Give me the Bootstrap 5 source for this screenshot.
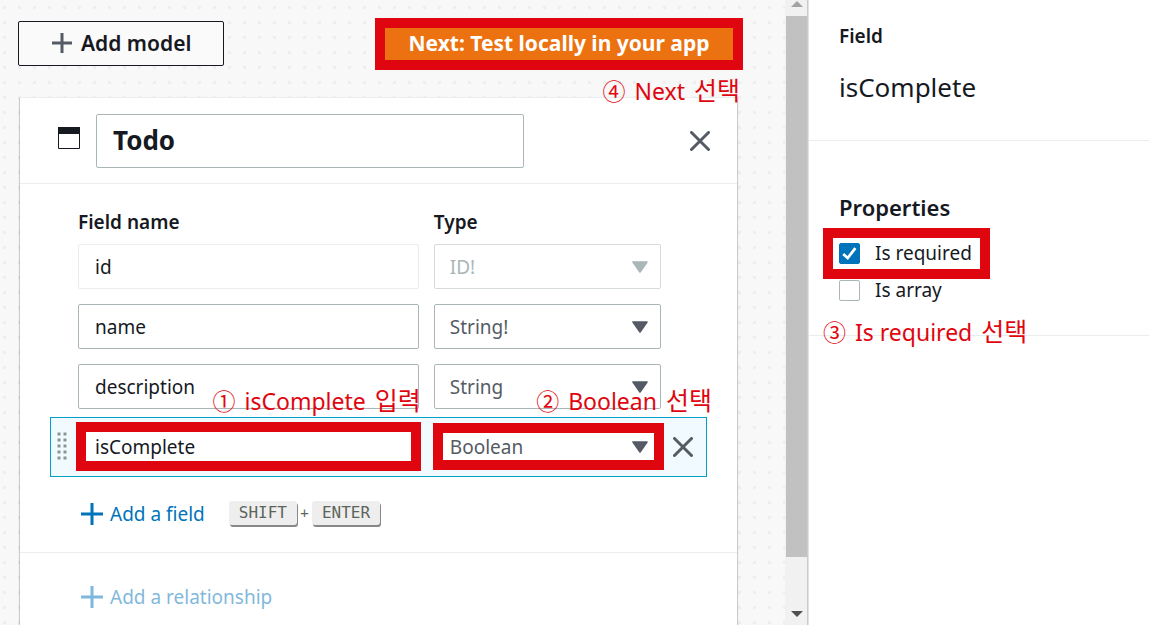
<!DOCTYPE html>
<html lang="ko">
<head>
<meta charset="utf-8">
<meta name="viewport" content="width=device-width, initial-scale=1">
<title>Data modeling</title>
<link href="https://cdn.jsdelivr.net/npm/bootstrap@5.3.0/dist/css/bootstrap.min.css" rel="stylesheet">
<style>
:root { --ink:#16191f; --slate:#545b64; --line:#eaeded; --edge:#aab7b8; --link:#0073bb; --mark-red:#df0610; }
body { font-family:"Noto Sans","Noto Sans CJK KR",sans-serif; font-size:19px; line-height:28px; color:var(--ink); background:#fff; }
.canvas { background:#f8f8f8 conic-gradient(from 90deg at 12px 12px, #eee 90deg, transparent 0) 6px 9px / 15px 15px; padding:21px 47px 0 18px; min-width:0; }
.tool-btn { height:45px; border-radius:2px; font-size:21px; font-weight:600; padding:0 32px 2px; line-height:28px; }
.add-model { background:#fafafa; border:1px solid var(--ink); color:var(--ink); }
.go-next { background:#ec7211; color:#fff; font-weight:700; width:358px; padding:0 0 2px; }
.frame { position:absolute; border:10px solid var(--mark-red); pointer-events:none; z-index:2; }
.frame-next { inset:-3px -5px -4px; }
.frame-name { inset:-2px; }
.frame-type { inset:-1px -3px -1px -1px; }
.frame-check { inset:0; }
.note { position:absolute; z-index:3; display:flex; align-items:baseline; gap:9px; color:var(--mark-red); font-size:23px; line-height:32px; white-space:nowrap; }
.note span { font-family:"Noto Sans CJK KR",sans-serif; font-size:25px; }
.note-next { top:52px; right:-2px; }
.note-name { bottom:52px; right:-2px; }
.note-type { bottom:52px; right:-51px; }
.note-check { left:0; top:86px; }
.model-card { background:#fff; margin:31px 1px 0 2px; border-top:1px solid var(--line); box-shadow:0 1px 1px rgba(0,28,36,.3), 1px 1px 1px rgba(0,28,36,.15), -1px 1px 1px rgba(0,28,36,.15); }
.model-head { padding:16px 27px 15px 38px; border-bottom:1px solid var(--line); }
.model-head .form-control { width:428px; height:54px; font-size:26px; font-weight:700; padding-bottom:2px; }
.model-icon { margin-bottom:6px; }
.form-control, .form-select { border:1px solid var(--edge); border-radius:2px; color:var(--ink); background-color:#fff; font-size:19px; height:45px; padding:0 16px; }
.form-select { color:var(--slate); padding:2px 40px 0 15px; background-image:url("data:image/svg+xml,%3Csvg xmlns='http://www.w3.org/2000/svg' viewBox='0 0 16 12'%3E%3Cpath d='M1 1h14L8 11z' fill='%23545b64' stroke='%23545b64' stroke-width='1.6' stroke-linejoin='round'/%3E%3C/svg%3E"); background-size:16px 12px; background-position:right 12px center; }
.form-select:disabled { color:var(--edge); border-color:#d5dbdb; background-color:#fff; background-image:url("data:image/svg+xml,%3Csvg xmlns='http://www.w3.org/2000/svg' viewBox='0 0 16 12'%3E%3Cpath d='M1 1h14L8 11z' fill='%23aab7b8' stroke='%23aab7b8' stroke-width='1.6' stroke-linejoin='round'/%3E%3C/svg%3E"); }
.form-control[readonly] { border-color:var(--line); }
.fields { padding:24px 30px; }
.field-row { display:grid; grid-template-columns:27px 3fr 2fr 45px; align-items:start; border:1px solid transparent; height:60px; padding-top:6px; }
.field-row.heads { height:29px; border-width:0 1px; padding:0; font-weight:600; line-height:28px; }
.field-row .name-cell { margin-right:9px; }
.field-row .type-cell { margin-left:6px; }
.field-row.active { background:#f1faff; border-color:#00a1c9; }
.field-row .icon-btn { height:45px; }
.grip { margin:8px 0 0 6px; }
.icon-btn { background:none; border:0; padding:0; line-height:0; color:var(--slate); }
.text-btn { background:none; border:0; padding:0; color:var(--link); display:flex; align-items:center; gap:7px; }
.text-btn:disabled { opacity:.5; }
.add-row { padding:23px 0 0 31px; }
.key-combo { font-family:"DejaVu Sans Mono","Liberation Mono",monospace; font-size:16px; line-height:24px; color:#5c645c; padding-bottom:2px; }
.key { background:#eee; border-radius:3px; padding:0 10px; box-shadow:1px 2px 0 #888; }
.key-plus { width:15px; text-align:center; font-size:14px; }
.relations { border-top:1px solid var(--line); padding:30px 61px; }
.scroll-track { width:23px; background:#f1f1f1; border-right:1px solid #c8cccc; padding-left:1px; }
.scroll-track svg { display:block; }
.thumb { background:#c1c1c1; flex-grow:541; }
.thumb-rest { flex-grow:52; }
.inspector { width:341px; border-left:1px solid #dfe3e3; }
.panel { padding:22px 30px 34px; border-bottom:1px solid var(--line); }
.panel-props { padding:50px 30px 31px; }
.panel-title { font-size:22px; font-weight:600; line-height:32px; margin:0 0 5px; }
.panel-label { font-size:19px; font-weight:600; line-height:28px; margin:0 0 19px; }
.panel-value { font-size:26px; line-height:36px; padding-bottom:1px; }
.check-wrap { position:relative; width:167px; height:51px; margin:0 0 -3px -16px; padding:0 0 1px 16px; }
.check-line { display:flex; align-items:center; gap:15px; }
.form-check-input { width:21px; height:21px; margin:0; border:1px solid var(--edge); flex-shrink:0; }
.form-check-input[type=checkbox] { border-radius:2px; }
.form-check-input:checked { background-color:var(--link); border-color:var(--link); }
.form-check-input:checked[type=checkbox] { background-image:url("data:image/svg+xml,%3Csvg xmlns='http://www.w3.org/2000/svg' viewBox='0 0 21 21'%3E%3Cpath d='M3.5 11l5 4.5L17 4.5' fill='none' stroke='%23fff' stroke-width='3'/%3E%3C/svg%3E"); }
</style>
</head>
<body>
<div class="d-flex vh-100 overflow-hidden">
  <main class="canvas flex-grow-1 d-flex flex-column">
    <div class="d-flex justify-content-between">
      <button type="button" class="btn tool-btn add-model d-flex align-items-center gap-2">
        <svg width="22" height="22" viewBox="0 0 22 22" stroke="#545b64" stroke-width="3" aria-hidden="true"><path d="M11 1v20M1 11h20"/></svg>Add model
      </button>
      <div class="position-relative">
        <button type="button" class="btn tool-btn go-next">Next: Test locally in your app</button>
        <span class="frame frame-next"></span>
        <div class="note note-next">④ <b class="fw-normal">Next</b> <span>선택</span></div>
      </div>
    </div>
    <section class="model-card flex-grow-1">
      <div class="model-head d-flex align-items-center">
        <svg class="model-icon me-3" width="22" height="22" viewBox="0 0 22 22" aria-hidden="true"><path d="M.5.5h21v21H.5z" fill="#fff" stroke="#16191f"/><path d="M0 0h22v7H0z" fill="#16191f"/></svg>
        <input class="form-control" aria-label="Model name" value="Todo">
        <button type="button" class="icon-btn ms-auto" aria-label="Remove model"><svg width="20" height="20" viewBox="0 0 20 20" stroke="currentColor" stroke-width="3" stroke-linecap="round"><path d="M1.5 1.5l17 17M18.5 1.5l-17 17"/></svg></button>
      </div>
      <div class="fields">
        <div class="field-row heads"><span></span><span class="name-cell">Field name</span><span class="type-cell">Type</span></div>
        <div class="field-row"><span></span>
          <div class="name-cell"><input class="form-control" aria-label="Field name" value="id" readonly></div>
          <div class="type-cell"><select class="form-select" aria-label="Type" disabled><option>ID!</option></select></div></div>
        <div class="field-row"><span></span>
          <div class="name-cell"><input class="form-control" aria-label="Field name" value="name"></div>
          <div class="type-cell"><select class="form-select" aria-label="Type"><option>String!</option></select></div></div>
        <div class="field-row"><span></span>
          <div class="name-cell"><input class="form-control" aria-label="Field name" value="description"></div>
          <div class="type-cell"><select class="form-select" aria-label="Type"><option>String</option></select></div></div>
        <div class="field-row active">
          <svg class="grip" width="11" height="28" viewBox="0 0 11 28" stroke="#879596" stroke-width="3" stroke-dasharray="3 3" aria-hidden="true"><path d="M2 .5v27M8 .5v27"/></svg>
          <div class="name-cell position-relative"><input class="form-control" aria-label="Field name" value="isComplete"><span class="frame frame-name"></span><div class="note note-name">① <b class="fw-normal">isComplete</b> <span>입력</span></div></div>
          <div class="type-cell position-relative"><select class="form-select" aria-label="Type"><option>Boolean</option></select><span class="frame frame-type"></span><div class="note note-type">② <b class="fw-normal">Boolean</b> <span>선택</span></div></div>
          <button type="button" class="icon-btn" aria-label="Remove field"><svg width="20" height="20" viewBox="0 0 20 20" stroke="currentColor" stroke-width="3" stroke-linecap="round"><path d="M1.5 1.5l17 17M18.5 1.5l-17 17"/></svg></button>
        </div>
        <div class="add-row d-flex align-items-center">
          <button type="button" class="text-btn"><svg width="22" height="22" viewBox="0 0 22 22" stroke="currentColor" stroke-width="3" aria-hidden="true"><path d="M11 0v22M0 11h22"/></svg>Add a field</button>
          <div class="d-flex align-items-center ms-4 key-combo"><span class="key">SHIFT</span><span class="key-plus">+</span><span class="key">ENTER</span></div>
        </div>
      </div>
      <div class="relations"><button type="button" class="text-btn" disabled><svg width="22" height="22" viewBox="0 0 22 22" stroke="currentColor" stroke-width="3" aria-hidden="true"><path d="M11 0v22M0 11h22"/></svg>Add a relationship</button></div>
    </section>
  </main>
  <div class="scroll-track d-flex flex-column flex-shrink-0" aria-hidden="true">
    <svg width="21" height="16" viewBox="0 0 21 16"><path d="M5 7l6-6 6 6z" fill="#a3a3a3"/></svg>
    <div class="thumb"></div><div class="thumb-rest"></div>
    <svg width="21" height="16" viewBox="0 0 21 16"><path d="M5 2h12l-6 6z" fill="#505050"/></svg>
  </div>
  <aside class="inspector flex-shrink-0">
    <div class="panel"><h2 class="panel-label">Field</h2><div class="panel-value">isComplete</div></div>
    <div class="panel panel-props"><h2 class="panel-title">Properties</h2>
      <div class="check-wrap d-flex align-items-center"><div class="check-line"><input class="form-check-input" type="checkbox" id="required" checked><label for="required">Is required</label></div><span class="frame frame-check"></span><div class="note note-check">③ <b class="fw-normal">Is required</b> <span>선택</span></div></div>
      <div class="check-line"><input class="form-check-input" type="checkbox" id="array"><label for="array">Is array</label></div>
    </div>
  </aside>
</div>
<script src="https://cdn.jsdelivr.net/npm/bootstrap@5.3.0/dist/js/bootstrap.bundle.min.js"></script>
</body>
</html>
